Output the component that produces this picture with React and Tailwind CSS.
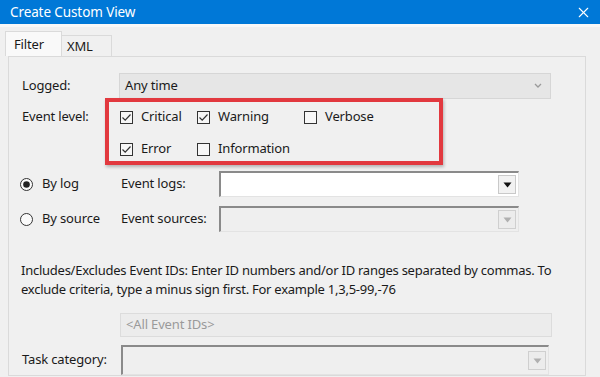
import { X } from 'lucide-react';

const font = { fontFamily: '"Noto Sans", "Open Sans", sans-serif' };

function Check({ checked }) {
  return (
    <svg width="13" height="13" viewBox="0 0 13 13" className="shrink-0">
      <rect x="0.5" y="0.5" width="12" height="12" fill="#f7f7f7" stroke="#333" />
      {checked && <path d="M2.5 6.5 L5.2 9.2 L10.5 3.5" fill="none" stroke="#333" strokeWidth="1.2" />}
    </svg>
  );
}

function Radio({ on }) {
  return (
    <svg width="13" height="13" viewBox="0 0 13 13" className="shrink-0">
      <circle cx="6.5" cy="6.5" r="6" fill="#fafafa" stroke="#333" />
      {on && <circle cx="6.5" cy="6.5" r="3.3" fill="#222" />}
    </svg>
  );
}

function Combo({ disabled, className = '' }) {
  return (
    <div
      className={`flex items-center justify-end h-[26px] border-t-2 border-l-2 border-t-[#8a8a8a] border-l-[#8a8a8a] border-r border-b border-r-[#e3e3e3] border-b-[#e3e3e3] pr-[2px] ${
        disabled ? 'bg-[#efefef]' : 'bg-white'
      } ${className}`}
    >
      <div
        className={`w-[18px] h-[19px] flex items-center justify-center border ${
          disabled ? 'border-[#cfcfcf] bg-[#ececec]' : 'border-[#c9c9c9] bg-[#f2f2f2]'
        }`}
      >
        <svg width="9" height="6" viewBox="0 0 9 6">
          <path d="M0.5 0.5 H8.5 L4.5 5.5 Z" fill={disabled ? '#b0b0b0' : '#111'} />
        </svg>
      </div>
    </div>
  );
}

function CheckItem({ checked, label, w }) {
  return (
    <div className={`flex items-center gap-[8px] ${w}`}>
      <Check checked={checked} />
      <span>{label}</span>
    </div>
  );
}

export default function App() {
  return (
    <div className="w-[600px] h-[377px] overflow-hidden bg-[#f0f0f0] text-[13px] tracking-[-0.15px] text-[#1a1a1a]" style={font}>
      <div className="h-[24px] bg-[#0078d7] flex items-center justify-between pl-[10px] pr-[8px] text-white text-[13.5px] tracking-[-0.1px]">
        <span>Create Custom View</span>
        <X size={17} strokeWidth={1.5} />
      </div>
      <div className="h-[3px] bg-[#f8f8f8]" />
      <div className="pl-[5px] pt-[4px]">
        <div className="flex items-end h-[25px]">
          <div className="w-[57px] h-[25px] bg-[#f9f9f9] border-t border-l border-r border-[#dadada] pl-[8px] pt-[3px]">Filter</div>
          <div className="w-[50px] h-[21px] border-t border-r border-[#dadada] pl-[5px] leading-[20px]">XML</div>
        </div>
        <div className="ml-[3px] w-[578px] h-[320px] border border-[#dadada] pl-[13px] pt-[15px]">
          <div className="flex items-center h-[27px]">
            <span className="w-[97px]">Logged:</span>
            <div className="w-[432px] h-[26px] bg-[#e6e6e6] border border-[#d6d6d6] flex items-center justify-between pl-[5px] pr-[8px]">
              <span>Any time</span>
              <svg width="8" height="5" viewBox="0 0 8 5">
                <path d="M1 1 L4 4 L7 1" fill="none" stroke="#9a9a9a" strokeWidth="1.3" />
              </svg>
            </div>
          </div>

          <div className="flex">
            <span className="w-[98px] pt-[8px]">Event level:</span>
            <div className="relative pt-[10px]">
              <div className="absolute -left-[15px] -top-[1px] w-[338px] h-[67px] border-[4px] border-[#e2393f] shadow-[1px_2px_3px_rgba(0,0,0,0.25)]" />
              <div className="flex h-[16px] items-center">
                <CheckItem checked label="Critical" w="w-[77px]" />
                <CheckItem checked label="Warning" w="w-[107px]" />
                <CheckItem label="Verbose" />
              </div>
              <div className="flex h-[16px] items-center mt-[16px]">
                <CheckItem checked label="Error" w="w-[77px]" />
                <CheckItem label="Information" />
              </div>
            </div>
          </div>

          <div className="flex items-center mt-[14px] -ml-[2px]">
            <div className="flex items-center gap-[9px] w-[101px]">
              <Radio on />
              <span>By log</span>
            </div>
            <span className="w-[98px]">Event logs:</span>
            <Combo className="w-[300px]" />
          </div>
          <div className="flex items-center mt-[9px] -ml-[2px]">
            <div className="flex items-center gap-[9px] w-[101px]">
              <Radio />
              <span>By source</span>
            </div>
            <span className="w-[98px]">Event sources:</span>
            <Combo disabled className="w-[300px]" />
          </div>

          <p className="mt-[29px] leading-[18.5px] pr-[8px] -ml-[1px] tracking-[-0.25px]">
            Includes/Excludes Event IDs: Enter ID numbers and/or ID ranges separated by commas. To exclude criteria, type a minus sign first. For example 1,3,5-99,-76
          </p>

          <div className="ml-[98px] mt-[15px] w-[432px] h-[24px] border border-[#dcdcdc] bg-[#ececec] flex items-center pl-[5px] text-[#9a9a9a]">
            &lt;All Event IDs&gt;
          </div>

          <div className="flex items-center mt-[8px]">
            <span className="w-[99px]">Task category:</span>
            <Combo disabled className="w-[428px] h-[30px]" />
          </div>
        </div>
      </div>
    </div>
  );
}
